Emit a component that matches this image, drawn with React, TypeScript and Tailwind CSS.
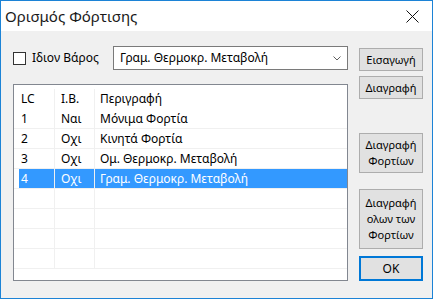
import React from 'react';

const rows = [
  { lc: '1', ib: 'Ναι', desc: 'Μόνιμα Φορτία' },
  { lc: '2', ib: 'Οχι', desc: 'Κινητά Φορτία' },
  { lc: '3', ib: 'Οχι', desc: 'Ομ. Θερμοκρ. Μεταβολή' },
  { lc: '4', ib: 'Οχι', desc: 'Γραμ. Θερμοκρ. Μεταβολή' },
  { lc: '', ib: '', desc: '' },
  { lc: '', ib: '', desc: '' },
  { lc: '', ib: '', desc: '' },
  { lc: '', ib: '', desc: '' },
];

const Btn = ({ children, className = '' }: { children: React.ReactNode; className?: string }) => (
  <div
    className={`w-[64px] flex flex-col items-center justify-center bg-[#e1e1e1] leading-[16px] text-black text-center ${className}`}
  >
    {children}
  </div>
);

const App = () => {
  return (
    <div
      className="w-[433px] h-[299px] border border-[#1c83d6] flex flex-col bg-white"
      style={{ fontFamily: '"Noto Sans", "DejaVu Sans", sans-serif' }}
    >
      {/* title bar */}
      <div className="h-[30px] flex items-center justify-between bg-white pl-[4px] pr-[13px]">
        <span className="text-[15px] text-[#1a1a1a]">Ορισμός Φόρτισης</span>
        <svg width="13" height="13" viewBox="0 0 13 13">
          <path d="M0.5 0.5 L12.5 12.5 M12.5 0.5 L0.5 12.5" stroke="#111" strokeWidth="1" />
        </svg>
      </div>

      <div className="flex-1 bg-[#f0f0f0] flex pl-[12px] pr-[9px] pb-[17px]">
        {/* left column */}
        <div className="w-[335px] flex flex-col pt-[15px]">
          <div className="h-[24px] flex items-center">
            <div className="w-[13px] h-[13px] border border-[#333] bg-white" />
            <span className="ml-[6px] text-[12px] text-black">Ιδιον Βάρος</span>
            <div className="ml-auto w-[235px] h-[24px] border border-[#7a7a7a] bg-white flex items-center pl-[6px] pr-[6px]">
              <span className="text-[12px] text-black">Γραμ. Θερμοκρ. Μεταβολή</span>
              <svg className="ml-auto" width="8" height="5" viewBox="0 0 8 5">
                <path d="M0.5 0.5 L4 4 L7.5 0.5" stroke="#606060" fill="none" strokeWidth="1" />
              </svg>
            </div>
          </div>

          <div className="mt-[14px] flex-1 border border-[#828790] bg-white pt-[4px] overflow-hidden text-[12px] text-black">
            <div className="h-[20px] flex">
              <div className="w-[41px] pl-[7px] flex items-center border-r border-[#f0f0f0]">LC</div>
              <div className="w-[40px] pl-[6px] flex items-center border-r border-[#f0f0f0]">I.B.</div>
              <div className="flex-1 pl-[5px] flex items-center">Περιγραφή</div>
            </div>
            {rows.map((r, i) => {
              const sel = i === 3;
              return (
                <div key={i} className="h-[20px] flex border-b border-[#f0f0f0]">
                  <div className="w-[41px] flex border-r border-[#f0f0f0]">
                    <div className={`flex-1 ml-[5px] pl-[2px] flex items-center ${sel ? 'bg-[#3399ff] text-white' : ''}`}>{r.lc}</div>
                  </div>
                  <div className={`w-[40px] pl-[6px] flex items-center border-r border-[#f0f0f0] ${sel ? 'bg-[#3399ff] text-white' : ''}`}>{r.ib}</div>
                  <div className={`flex-1 pl-[5px] flex items-center ${sel ? 'bg-[#3399ff] text-white' : ''}`}>{r.desc}</div>
                </div>
              );
            })}
          </div>
        </div>

        {/* right column */}
        <div className="ml-[11px] flex flex-col pt-[17px]">
          <Btn className="h-[23px] border border-[#adadad] text-[11px]">Εισαγωγή</Btn>
          <Btn className="h-[23px] mt-[5px] border border-[#adadad] text-[11px]">Διαγραφή</Btn>
          <Btn className="h-[40px] mt-[34px] border border-[#adadad] text-[11px]">
            <span>Διαγραφή</span>
            <span>Φορτίων</span>
          </Btn>
          <Btn className="h-[60px] mt-[16px] border border-[#adadad] text-[11px]">
            <span>Διαγραφή</span>
            <span>ολων των</span>
            <span>Φορτίων</span>
          </Btn>
          <Btn className="h-[25px] mt-[7px] border-2 border-[#0078d7] text-[12px]">OK</Btn>
        </div>
      </div>
    </div>
  );
};

export default App;
